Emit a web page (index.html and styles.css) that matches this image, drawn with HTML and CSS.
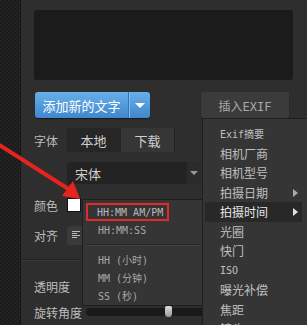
FILE: index.html
```html
<!DOCTYPE html>
<html lang="zh">
<head>
  <meta charset="UTF-8">
  <title>插入EXIF</title>
  <link rel="stylesheet" href="styles.css">
</head>
<body>
  <div class="screen">
    <div class="side"></div>
    <div class="panel">
      <div class="text-box"></div>
      <div class="button-row">
        <div class="add-button">
          <span class="add-label">添加新的文字</span>
          <span class="add-caret"><span class="tri-down"></span></span>
        </div>
        <div class="exif-button">插入EXIF</div>
      </div>

      <div class="row font-row">
        <span class="label">字体</span>
        <div class="tabs">
          <span class="tab active">本地</span>
          <span class="tab">下载</span>
        </div>
      </div>

      <div class="row select-row">
        <div class="select">
          <span class="select-value">宋体</span>
          <span class="select-caret"><span class="tri-down small"></span></span>
        </div>
      </div>

      <div class="row color-row">
        <span class="label">颜色</span>
        <span class="swatch"></span>
      </div>

      <div class="row align-row">
        <span class="label">对齐</span>
        <span class="align-btn">
          <svg width="10" height="10" viewBox="0 0 10 10">
            <path d="M1 1.5h8M1 3.5h5M1 5.5h8M1 7.5h5" stroke="#bbb" stroke-width="1"/>
          </svg>
        </span>
      </div>

      <div class="divider"></div>

      <div class="row opacity-row">
        <span class="label">透明度</span>
      </div>

      <div class="row rotate-row">
        <span class="label">旋转角度</span>
        <div class="slider"><span class="thumb"></span></div>
      </div>
    </div>

    <div class="time-menu">
      <div class="time-item picked">HH:MM AM/PM</div>
      <div class="time-item">HH:MM:SS</div>
      <div class="time-sep"></div>
      <div class="time-item">HH (小时)</div>
      <div class="time-item">MM (分钟)</div>
      <div class="time-item">SS (秒)</div>
    </div>

    <div class="exif-menu">
      <div class="menu-item mono">Exif摘要</div>
      <div class="menu-item">相机厂商</div>
      <div class="menu-item">相机型号</div>
      <div class="menu-item has-sub">拍摄日期</div>
      <div class="menu-item has-sub current">拍摄时间</div>
      <div class="menu-item">光圈</div>
      <div class="menu-item">快门</div>
      <div class="menu-item mono">ISO</div>
      <div class="menu-item">曝光补偿</div>
      <div class="menu-item">焦距</div>
      <div class="menu-item">镜头</div>
    </div>

    <svg class="arrow" width="90" height="210" viewBox="0 0 90 210">
      <line x1="-2" y1="144" x2="70" y2="190" stroke="#e8231f" stroke-width="4"/>
      <polygon points="80,199 62,196 73,181" fill="#e8231f"/>
    </svg>
  </div>
</body>
</html>
```

FILE: styles.css
```css
body {
  margin: 0;
  background: #2e2e2e;
  font-family: "Noto Sans CJK SC", "Noto Sans", sans-serif;
  font-size: 12px;
  color: #c4c4c4;
}
.screen {
  position: relative;
  width: 307px;
  height: 325px;
  overflow: hidden;
  display: grid;
  grid-template-columns: 21px 1fr;
}
.side {
  background-color: #222;
  background-image:
    linear-gradient(45deg, #1b1b1b 25%, transparent 25%, transparent 75%, #1b1b1b 75%),
    linear-gradient(45deg, #1b1b1b 25%, transparent 25%, transparent 75%, #1b1b1b 75%);
  background-size: 4px 4px;
  background-position: 0 0, 2px 2px;
  border-right: 1px solid #161616;
}
.panel {
  background: #2e2e2e;
  padding: 10px 0 0 13px;
}
.text-box {
  width: 259px;
  height: 70px;
  background: #1b1b1b;
  border-radius: 3px;
}
.button-row {
  display: flex;
  margin-top: 12px;
  height: 26px;
}
.add-button {
  display: flex;
  width: 115px;
  margin-left: 1px;
  border-radius: 3px;
  background: linear-gradient(#67b0ea, #3f86cd);
  color: #fff;
  font-size: 13px;
  box-shadow: 0 1px 1px rgba(0, 0, 0, 0.5);
}
.add-label {
  width: 93px;
  display: flex;
  align-items: center;
  justify-content: center;
  border-right: 1px solid #3576b8;
}
.add-caret {
  flex: 1;
  display: flex;
  align-items: center;
  justify-content: center;
  border-left: 1px solid #7cbcef;
}
.tri-down {
  width: 0;
  height: 0;
  border-left: 5px solid transparent;
  border-right: 5px solid transparent;
  border-top: 5px solid #fff;
}
.tri-down.small {
  border-left-width: 4px;
  border-right-width: 4px;
  border-top: 4px solid #999;
}
.exif-button {
  margin-left: 51px;
  width: 88px;
  display: flex;
  align-items: center;
  justify-content: center;
  background: #3b3b3b;
  border-radius: 2px;
  color: #a8a8a8;
  font-family: "DejaVu Sans Mono", "Noto Sans CJK SC", monospace;
  font-size: 12px;
  box-shadow: 0 1px 1px rgba(0, 0, 0, 0.5);
}
.row {
  display: flex;
  align-items: center;
}
.label {
  width: 33px;
  flex: none;
  white-space: nowrap;
  color: #bdbdbd;
  font-size: 12px;
}
.font-row {
  margin-top: 10px;
  height: 24px;
}
.tabs {
  display: flex;
}
.tab {
  width: 53px;
  height: 24px;
  display: flex;
  align-items: center;
  justify-content: center;
  background: #363636;
  color: #cfcfcf;
  border-right: 1px solid #242424;
  font-size: 13px;
}
.tab.active {
  background: #262626;
}
.select-row {
  margin-top: 10px;
  padding-left: 33px;
}
.select {
  display: flex;
  width: 134px;
  height: 22px;
  background: #232323;
  border-radius: 2px;
}
.select-value {
  flex: 1;
  padding-left: 8px;
  display: flex;
  align-items: center;
  color: #cfcfcf;
  font-size: 13px;
}
.select-caret {
  width: 14px;
  display: flex;
  align-items: center;
  justify-content: center;
  background: #2b2b2b;
}
.color-row {
  margin-top: 13px;
  height: 16px;
}
.swatch {
  width: 12px;
  height: 12px;
  background: #fff;
  border: 1px solid #111;
}
.align-row {
  margin-top: 12px;
  height: 20px;
}
.align-btn {
  width: 18px;
  height: 19px;
  display: flex;
  align-items: center;
  justify-content: center;
  background: #3a3a3a;
  border-radius: 3px;
}
.divider {
  margin: 14px 0 0 -13px;
  height: 1px;
  background: #232323;
  border-bottom: 1px solid #383838;
}
.opacity-row {
  margin-top: 16px;
  height: 18px;
}
.rotate-row {
  margin-top: 8px;
  height: 18px;
}
.rotate-row .label {
  width: 52px;
}
.slider {
  position: relative;
  width: 130px;
  height: 8px;
  background: #1a1a1a;
  border-radius: 4px;
}
.thumb {
  position: absolute;
  left: 79px;
  top: -2px;
  width: 7px;
  height: 11px;
  background: linear-gradient(#ddd, #999);
  border-radius: 2px 2px 4px 4px;
}
.time-menu {
  position: absolute;
  left: 82px;
  top: 199px;
  width: 124px;
  height: 107px;
  background: #353535;
  border: 1px solid #1e1e1e;
  padding-top: 3px;
  box-sizing: border-box;
  font-family: "DejaVu Sans Mono", "Noto Sans CJK SC", monospace;
  font-size: 10px;
  color: #a8a8a8;
  white-space: nowrap;
}
.time-item {
  height: 18px;
  display: flex;
  align-items: center;
  padding-left: 12px;
  margin: 0 3px;
}
.time-item.picked {
  border: 2px solid #e22a2a;
  height: 14px;
  width: 70px;
  padding-left: 9px;
  color: #b8b8b8;
}
.time-sep {
  height: 1px;
  background: #262626;
  border-bottom: 1px solid #424242;
  margin: 5px 4px 4px 4px;
}
.exif-menu {
  position: absolute;
  left: 202px;
  top: 118px;
  width: 110px;
  height: 220px;
  background: #353535;
  border: 1px solid #1e1e1e;
  padding-top: 5px;
  box-sizing: border-box;
  color: #c0c0c0;
  font-size: 12px;
}
.menu-item {
  position: relative;
  height: 19.5px;
  display: flex;
  align-items: center;
  padding-left: 15px;
  margin: 0 9px 0 2px;
}
.menu-item.mono {
  font-family: "DejaVu Sans Mono", "Noto Sans CJK SC", monospace;
  font-size: 10px;
}
.menu-item.has-sub::after {
  content: "";
  position: absolute;
  right: 4px;
  top: 6px;
  border-top: 4px solid transparent;
  border-bottom: 4px solid transparent;
  border-left: 5px solid #aaa;
}
.menu-item.current {
  background: #282828;
  color: #e6e6e6;
}
.menu-item.current::after {
  border-left-color: #e0e0e0;
}
.arrow {
  position: absolute;
  left: 0;
  top: 0;
}
```
